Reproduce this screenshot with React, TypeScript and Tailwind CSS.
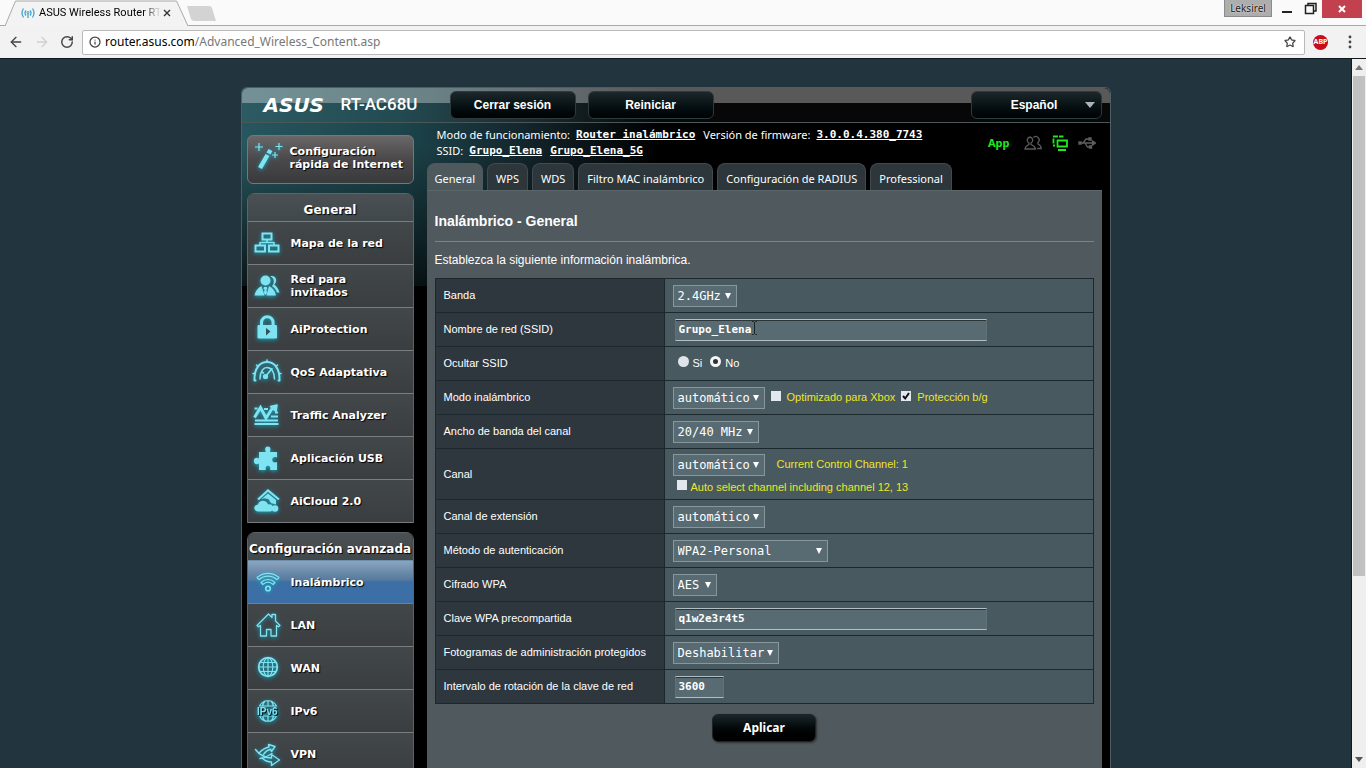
import React from 'react';
import { ArrowLeft, ArrowRight, Info, RotateCw, Star } from 'lucide-react';

interface MenuItem {
  label: React.ReactNode;
  icon: React.ReactNode;
  active?: boolean;
}

interface SelectProps {
  id: string;
  options: string[];
  className: string;
}

const Icon: React.FC<{ children: React.ReactNode }> = ({ children }) => (
  <svg
    viewBox="0 0 28 28"
    className="h-7 w-7 shrink-0 overflow-visible fill-none stroke-[#7fe3f1] drop-shadow-[0_1px_2px_#11aac4]"
    strokeWidth="1.6"
    strokeLinejoin="round"
    strokeLinecap="round"
  >
    {children}
  </svg>
);

const generalItems: MenuItem[] = [
  {
    label: 'Mapa de la red',
    icon: (
      <Icon>
        <path strokeWidth="2" strokeLinejoin="miter" d="M9.5 4.5h9v6h-9zM2.5 16.5h9.5v6H2.5zM16 16.5h9.5v6H16z" />
        <path d="M14 11v2.500M7 16v-2.500h14V16" />
      </Icon>
    ),
  },
  {
    label: <>Red para<br />invitados</>,
    icon: (
      <Icon>
        <path fill="#7fe3f1" stroke="none" d="M17 4.200c4-1.200 6.500 1.300 6 4.800-.2 1.600-.8 2.800-1.800 3.700 2.500 1.600 4 3.800 5.300 7.800H24c-1-3-2.500-5-5-6.300 1.500-1.800 2-3.500 1.700-6-.3-1.700-1.500-3.200-3.700-4z" />
        <circle cx="12.500" cy="8.500" r="5" fill="#7fe3f1" stroke="none" />
        <path fill="#7fe3f1" stroke="none" d="M8.500 14l3 9.500H1.500c.8-4 3-7.700 7-9.500zM16 14c4 1.800 6.300 5.500 7 9.500H13.500z" />
        <path fill="#7fe3f1" stroke="none" d="M11 15h2.800l.6 1.500-1 1.200.6 3.300-1.600 2-1.500-2 .7-3.300-1.200-1.200z" />
      </Icon>
    ),
  },
  {
    label: 'AiProtection',
    icon: (
      <Icon>
        <path strokeWidth="3" d="M8.500 11V7.500a5.800 5.800 0 0 1 11.600 0V11" />
        <rect x="4.500" y="10" width="19.500" height="13.500" rx="1.200" fill="#7fe3f1" stroke="none" />
        <path fill="#33515a" stroke="none" d="M13 13l4.500 3.500-4.500 4z" />
      </Icon>
    ),
  },
  {
    label: 'QoS Adaptativa',
    icon: (
      <Icon>
        <path strokeWidth="2" d="M2.500 22.500h-1C1 10 7 4 14 4s13 6 12.500 18.500h-1" />
        <path strokeWidth="1.500" d="M7 21c0-8 3.500-11.500 7-11.500 4 0 7.500 4 7.500 11.500" />
        <path d="M14 4V2M5 8.500L3.500 7M23 8.500L24.500 7M1.500 15.500H0M28 15.500h-1.500M12.500 18.500L19 10.500M9 14l1.500 1" />
        <circle cx="12.500" cy="18.500" r="1.800" fill="#7fe3f1" />
      </Icon>
    ),
  },
  {
    label: 'Traffic Analyzer',
    icon: (
      <Icon>
        <path strokeWidth="3" strokeLinejoin="miter" strokeLinecap="butt" d="M1.500 16.500l6-10 5.500 10.500 6.500-10" />
        <path fill="#7fe3f1" d="M17.500 5.500l6.500-1.500-1 6.500z" />
        <path strokeWidth="2" strokeLinecap="butt" d="M1.500 7.500h3M11 8h4M2 19.500h23M1.500 23h24M18 15.500h7M22 11.500h3" />
      </Icon>
    ),
  },
  {
    label: 'Aplicación USB',
    icon: (
      <Icon>
        <path
          fill="#7fe3f1"
          stroke="none"
          d="M6 8h7c-1.500-2.500-1-5.500 1.800-5.500S18 5.500 16.800 8H24v5.500c-2.800-1.200-4.800 0-4.800 2.300s2 3.400 4.800 2.200V26h-7c.9-2.500-.2-4.200-2-4.200s-3 1.700-2 4.200H6v-6.500c-2.800 1.500-5.200.2-5.200-2.500S3.200 13 6 14.500z"
        />
      </Icon>
    ),
  },
  {
    label: 'AiCloud 2.0',
    icon: (
      <Icon>
        <path strokeWidth="2.200" strokeLinecap="butt" strokeLinejoin="miter" d="M5 12.500L15 3.500l11 9" />
        <path fill="#7fe3f1" stroke="none" d="M8 12.500l7-6 8 6.500v4.500l-5-1.500-2.500-4-4.500-.8z" />
        <path fill="#7fe3f1" stroke="none" d="M5.500 24.500C0 24.500 0 18 5 17.500c.5-4.500 8.500-5.500 10 0 3-.8 5 .8 5 3.500 0 2.200-1.200 3.500-3 3.500z" />
        <circle cx="22" cy="21.500" r="3.300" fill="#7fe3f1" stroke="none" />
      </Icon>
    ),
  },
];

const advancedItems: MenuItem[] = [
  {
    label: 'Inalámbrico',
    active: true,
    icon: (
      <Icon>
        <path d="M4 9.500c6.500-5.500 15.500-5.500 22 0l-2 2.200c-5.300-4.700-12.700-4.700-18 0z" strokeWidth="1.200" />
        <path d="M8 14.500c4-4 10-4 14 0l-1.800 2c-3.200-3-7.200-3-10.400 0z" strokeWidth="1.200" />
        <circle cx="15" cy="20.500" r="2.300" />
      </Icon>
    ),
  },
  {
    label: 'LAN',
    icon: (
      <Icon>
        <path d="M4 14.500L15.500 3l3.500 3.500V3.500h3.500V10l4.500 4.500-1.500 1.300-2-1.300V25h-5.500v-6.500h-4.500V25H7.500V14.500l-2 1.300z" strokeWidth="1.300" />
      </Icon>
    ),
  },
  {
    label: 'WAN',
    icon: (
      <Icon>
        <circle cx="15" cy="13" r="9.300" strokeWidth="1.800" />
        <path d="M15 4v18M6 13h18M7.500 8.500h15M7.500 17.500h15" strokeWidth="1.200" />
        <ellipse cx="15" cy="13" rx="4.800" ry="9.200" strokeWidth="1.200" />
      </Icon>
    ),
  },
  {
    label: 'IPv6',
    icon: (
      <Icon>
        <path d="M6.500 9C10 2 20 2 23.500 9zM6.500 19C10 26 20 26 23.500 19zM15 4v5M15 19v5M12 4c-1.500 1.500-2 3-2.500 5M18 4c1.500 1.500 2 3 2.500 5M12 24c-1.500-1.500-2-3-2.500-5M18 24c1.500-1.500 2-3 2.500-5" strokeWidth="1.200" />
        <text x="4" y="17.500" className="fill-[#7fe3f1] stroke-none font-['Liberation_Sans'] text-[10px]">IPv6</text>
      </Icon>
    ),
  },
  {
    label: 'VPN',
    icon: (
      <Icon>
        <path d="M2.500 9.500c4 6 11 8.500 16 8.500v-3.500l8 5.500-8 5.500v-3.500c-4 0-7-1.500-9.500-4M6 13c4-4 7-5.500 10-6l-.5-2.500 6.500 2-3.500 5-.8-2.200c-3 .6-5 2-7.200 5M7 18.500l5-1 7-4" strokeWidth="1.400" />
      </Icon>
    ),
  },
];

const tabs = ['General', 'WPS', 'WDS', 'Filtro MAC inalámbrico', 'Configuración de RADIUS', 'Professional'];

const Menu: React.FC<{ title: string; items: MenuItem[] }> = ({ title, items }) => (
  <nav className="overflow-hidden rounded-t-lg border-x border-[#5d6467] font-bold text-white">
    <h2 className="flex h-7 items-center justify-center border-t border-[#5d6467] bg-linear-to-b from-[#4a5053] to-[#41484b] pt-1 text-xs whitespace-nowrap text-shadow-[1px_1px_1px_#000]">
      {title}
    </h2>
    {items.map((item, index) => (
      <a
        key={index}
        href="#"
        className={`flex h-[43px] items-center gap-2.5 border-t pl-[5px] text-[11px] leading-[13px] text-shadow-[1px_1px_1px_#000] ${
          item.active
            ? 'border-[#6d8fac] bg-linear-to-b from-[#8ba5bf] from-0% via-[#56799d] via-45% to-[#3b6fa5] to-50%'
            : 'border-[#777d80] bg-linear-to-b from-[#42474a] to-[#3a3e41]'
        }`}
      >
        {item.icon}
        <span>{item.label}</span>
      </a>
    ))}
    <div className="border-t border-[#777d80]" />
  </nav>
);

const Select: React.FC<SelectProps> = ({ id, options, className }) => (
  <span className={`relative inline-flex ${className}`}>
    <select
      id={id}
      className="h-[22px] w-full appearance-none border border-[#87979c] bg-[#596b72] pl-1 font-['DejaVu_Sans_Mono',monospace] text-xs text-white"
    >
      {options.map((option) => (
        <option key={option}>{option}</option>
      ))}
    </select>
    <svg viewBox="0 0 6 6" className="pointer-events-none absolute top-2 right-1.5 h-1.5 w-1.5 fill-white">
      <path d="M0 0h6L3 6z" />
    </svg>
  </span>
);

const inputClass =
  "h-[22px] border border-x-[#5f7278] border-t-[#b4bfc3] border-b-[#b4bfc3] bg-[#596b72] pl-[3px] font-['DejaVu_Sans_Mono',monospace] text-[11px] font-bold text-white shadow-[inset_0_1px_0_#2b3538]";

const Check: React.FC<{ id: string; checked?: boolean }> = ({ id, checked }) => (
  <span className="relative mb-1 inline-flex">
    <input id={id} type="checkbox" defaultChecked={checked} className="peer h-2.5 w-2.5 appearance-none bg-[#e3e8ee]" />
    <svg viewBox="0 0 10 10" className="pointer-events-none absolute inset-0 hidden h-2.5 w-2.5 fill-none stroke-[#111] stroke-2 peer-checked:block">
      <path d="M2 5l2.200 2.500L8 2" />
    </svg>
  </span>
);

const radioClass =
  'mb-1 h-[11px] w-[11px] appearance-none rounded-full bg-[#dfe4ea] checked:border-3 checked:border-[#f4f6f8] checked:bg-[#2c3335]';

const Row: React.FC<{ id: string; label: string; children: React.ReactNode }> = ({ id, label, children }) => (
  <tr className="border border-[#1b292e]">
    <th scope="row" className="w-[229px] border-r border-[#1b292e] bg-[#2f373e] px-2 text-left font-normal">
      <label htmlFor={id}>{label}</label>
    </th>
    <td className="h-[34px] bg-[#495960] px-2">
      <div className="flex items-center">{children}</div>
    </td>
  </tr>
);

const headerButton =
  "flex h-7 items-center justify-center rounded-md border border-[#2d3a3e] bg-linear-to-b from-[#1d282c] to-[#000304] font-['Liberation_Sans',sans-serif] text-xs font-bold text-white";

const statusLink = "font-['DejaVu_Sans_Mono',monospace] font-bold underline";

const BrowserBar = () => (
  <header className="bg-[#fafafa] font-['Noto_Sans',sans-serif] text-xs">
    <div className="flex h-[26px] items-start justify-between border-b border-[#a8a8a8]">
      <div className="flex pl-[5px]">
        <div className="relative flex h-[26px] w-[184px] items-center pl-4">
          <svg viewBox="0 0 184 26" className="absolute inset-0 h-full w-full fill-[#f3f3f3] stroke-[#aaa]">
            <path d="M0 26L10.500 1h161L183 26" />
          </svg>
          <svg viewBox="0 0 14 12" className="relative h-3 w-3.5 fill-none stroke-[#45a5cf]">
            <path d="M2.500 1.500c-2 3-2 6 0 9M5 3.500c-1.300 1.700-1.300 3.500 0 5M9 3.500c1.300 1.700 1.300 3.500 0 5M11.500 1.500c2 3 2 6 0 9M7 6v5" strokeWidth="1.300" />
            <circle cx="7" cy="5.500" r="1" />
          </svg>
          <span className="relative ml-1 w-[122px] mask-r-from-85% font-['Roboto',sans-serif] text-[11px] whitespace-nowrap text-black">ASUS Wireless Router RT</span>
          <button aria-label="Cerrar pestaña" className="relative ml-0.5">
            <svg viewBox="0 0 8 8" className="h-2 w-2 stroke-[#333] stroke-[1.4]">
              <path d="M1 1l6 6M7 1L1 7" />
            </svg>
          </button>
        </div>
        <button aria-label="Nueva pestaña" className="mt-1.5 -ml-0.5 self-start">
          <svg viewBox="0 0 30 15" className="h-[15px] w-[30px] fill-[#d3d3d3]">
            <path d="M0 0h22q2 0 3 2l4 13H7q-2 0-3-2z" />
          </svg>
        </button>
      </div>
      <div className="flex items-start">
        <button className="mr-2.5 h-[17px] w-12 border border-t-0 border-[#8b8b8b] bg-[#adadad] text-[10px] leading-none text-[#222] text-shadow-[0_0_2px_#fff]">Leksirel</button>
        <button aria-label="Minimizar" className="h-4 w-5">
          <svg viewBox="0 0 20 16" className="h-4 w-5 stroke-[#222] stroke-2"><path d="M0 12h10" /></svg>
        </button>
        <button aria-label="Restaurar" className="h-4 w-5">
          <svg viewBox="0 0 20 16" className="h-4 w-5 fill-none stroke-[#222] stroke-[1.5]"><path d="M3.500 5.500h8v8h-8zM6 5V3.500h8V11h-2" /></svg>
        </button>
        <button aria-label="Cerrar" className="flex h-[18px] w-10 items-center justify-center bg-[#c3414f]">
          <svg viewBox="0 0 8 8" className="h-2 w-2 stroke-white stroke-2"><path d="M1 1l6 6M7 1L1 7" /></svg>
        </button>
        <div className="w-1" />
      </div>
    </div>
    <div className="flex h-[33px] items-center gap-1.5 border-b border-[#10191f] bg-[#f2f2f2] px-2 text-[#444]">
      <button aria-label="Atrás"><ArrowLeft className="h-4 w-4" /></button>
      <button aria-label="Adelante" className="ml-1 text-[#d0d0d0]"><ArrowRight className="h-4 w-4" /></button>
      <button aria-label="Recargar" className="mr-0.5 ml-1"><RotateCw className="h-3.5 w-3.5" strokeWidth={2.5} /></button>
      <div className="flex h-[25px] flex-1 items-center rounded-xs border border-[#b9b9b9] bg-white pr-2 pl-1.5">
        <Info className="h-3 w-3" strokeWidth={2.5} />
        <div className="relative ml-1 flex-1">
          <input aria-label="Dirección" defaultValue="router.asus.com/Advanced_Wireless_Content.asp" className="w-full text-[#777] outline-none" />
          <span aria-hidden="true" className="pointer-events-none absolute top-0 left-0 bg-white text-black">router.asus.com</span>
        </div>
        <button aria-label="Favorito"><Star className="h-3 w-3" strokeWidth={2.5} /></button>
      </div>
      <button className="ml-0.5 flex h-[15px] w-[15px] items-center justify-center rounded-full bg-[#c70d1c] text-[7px] font-bold text-white">ABP</button>
      <button aria-label="Menú" className="mr-0.5 ml-2.5">
        <svg viewBox="0 0 12 14" className="h-3.5 w-3 fill-[#444]">
          <circle cx="6" cy="2" r="1.4" /><circle cx="6" cy="7" r="1.4" /><circle cx="6" cy="12" r="1.4" />
        </svg>
      </button>
    </div>
  </header>
);

const Sidebar = () => (
  <aside className="flex w-[167px] shrink-0 flex-col gap-[9px] pt-3">
    <a
      href="#"
      className="flex h-[49px] items-center gap-2 rounded-md border border-[#777] bg-linear-to-b from-[#6a6768] via-[#4a484a] to-[#393a3c] pb-1 pl-1.5 text-[11px] leading-[13px] font-bold text-white text-shadow-[1px_1px_1px_#000]"
    >
      <svg viewBox="0 0 28 28" className="h-7 w-7 shrink-0 overflow-visible stroke-[#7fe3f1] drop-shadow-[0_1px_2px_#11aac4]">
        <path strokeWidth="4.5" d="M6 24l7.500-13" />
        <path strokeWidth="4.5" d="M14.500 9.500l2-3.500" />
        <path strokeWidth="1.2" d="M5 -1v8M1 3h8M25 -1v7M21.500 2.500h7M21 8v6M18 11h6" />
      </svg>
      <span className="whitespace-nowrap">Configuración<br />rápida de Internet</span>
    </a>
    <Menu title="General" items={generalItems} />
    <Menu title="Configuración avanzada" items={advancedItems} />
  </aside>
);

const SettingsTable = () => (
  <table className="w-full border-collapse text-[11px]">
    <tbody>
      <Row id="band" label="Banda">
        <Select id="band" options={['2.4GHz', '5GHz']} className="w-16" />
      </Row>
      <Row id="ssid" label="Nombre de red (SSID)">
        <span className="relative ml-0.5">
          <input id="ssid" defaultValue="Grupo_Elena" className={`${inputClass} w-[312px]`} />
          <svg viewBox="0 0 7 14" className="pointer-events-none absolute top-0.5 left-19 h-3.5 w-[7px] fill-none stroke-[#20282b]">
            <path d="M1 .5h1.500l1 1 1-1H6M3.500 1v12M1 13.500h1.500l1-1 1 1H6" />
          </svg>
        </span>
      </Row>
      <Row id="hide-no" label="Ocultar SSID">
        <input type="radio" name="hide" id="hide-yes" className={`${radioClass} ml-[5px]`} />
        <label htmlFor="hide-yes" className="ml-1">Si</label>
        <input type="radio" name="hide" id="hide-no" defaultChecked className={`${radioClass} ml-2`} />
        <label htmlFor="hide-no" className="ml-1">No</label>
      </Row>
      <Row id="mode" label="Modo inalámbrico">
        <Select id="mode" options={['automático']} className="mr-1.5 w-[92px]" />
        <Check id="xbox" />
        <label htmlFor="xbox" className="mx-1.5 text-[#ece62a]">Optimizado para Xbox</label>
        <Check id="protection" checked />
        <label htmlFor="protection" className="ml-1.5 text-[#ece62a]">Protección b/g</label>
      </Row>
      <Row id="bandwidth" label="Ancho de banda del canal">
        <Select id="bandwidth" options={['20/40 MHz']} className="w-[86px]" />
      </Row>
      <Row id="channel" label="Canal">
        <div className="flex h-[50px] flex-col justify-center">
          <div className="flex items-center">
            <Select id="channel" options={['automático']} className="w-[92px]" />
            <span className="ml-3 text-[#ece62a]">Current Control Channel: 1</span>
          </div>
          <div className="flex items-center pt-1 pl-1">
            <Check id="auto" />
            <label htmlFor="auto" className="ml-1 text-[#ece62a]">Auto select channel including channel 12, 13</label>
          </div>
        </div>
      </Row>
      <Row id="extension" label="Canal de extensión">
        <Select id="extension" options={['automático']} className="w-[92px]" />
      </Row>
      <Row id="auth" label="Método de autenticación">
        <Select id="auth" options={['WPA2-Personal']} className="w-[155px]" />
      </Row>
      <Row id="cipher" label="Cifrado WPA">
        <Select id="cipher" options={['AES']} className="w-11" />
      </Row>
      <Row id="key" label="Clave WPA precompartida">
        <input id="key" defaultValue="q1w2e3r4t5" className={`${inputClass} ml-0.5 w-[312px]`} />
      </Row>
      <Row id="frames" label="Fotogramas de administración protegidos">
        <Select id="frames" options={['Deshabilitar']} className="w-[106px]" />
      </Row>
      <Row id="rotation" label="Intervalo de rotación de la clave de red">
        <input id="rotation" defaultValue="3600" className={`${inputClass} ml-0.5 w-[49px]`} />
      </Row>
    </tbody>
  </table>
);

const StatusBar = () => (
  <div className="flex h-10 items-start justify-between pt-1 pr-1.5 pl-2.5 text-[11px] leading-4 text-white">
    <div className="whitespace-nowrap">
      <p className="flex gap-1.5">
        <span>Modo de funcionamiento:</span>
        <a href="#" className={`${statusLink} mr-0.5`}>Router inalámbrico</a>
        <span>Versión de firmware:</span>
        <a href="#" className={statusLink}>3.0.0.4.380_7743</a>
      </p>
      <p className="flex gap-1.5">
        <span>SSID:</span>
        <a href="#" className={`${statusLink} mr-0.5`}>Grupo_Elena</a>
        <a href="#" className={statusLink}>Grupo_Elena_5G</a>
      </p>
    </div>
    <div className="flex items-center gap-2.5 pt-2">
      <a href="#" className="mr-1 font-bold text-[#1fe81f]">App</a>
      <svg viewBox="0 0 18 16" className="h-4 w-[18px] fill-none stroke-[#5a5a5a] stroke-[1.3]">
        <path d="M6 2a3.200 3.200 0 0 1 1 6v1.500c2.500 1 4 2 4.500 4.500H1c.3-2.500 2-3.500 4-4.500V8a3.200 3.200 0 0 1 1-6zM9.500 2.500a3.200 3.200 0 0 1 4.500 5V9c2 .8 3 2.200 3.200 4.500h-4" />
      </svg>
      <svg viewBox="0 0 16 16" className="h-4 w-4 fill-none stroke-[#1fe81f] stroke-[1.8]">
        <path d="M5.500 5.500H15v6H5.500zM6 15h8" />
        <path d="M1 1.500h10.500M1.500 3.500v5M1 10.500h2" strokeDasharray="5 1" />
      </svg>
      <svg viewBox="0 0 18 14" className="h-3.5 w-[18px] fill-none stroke-[#5f5f5f] stroke-[1.3]">
        <path d="M2 7h14M5 7l3-4h3M7 7l2.500 4H12" />
        <path fill="#5f5f5f" d="M14.500 5l3 2-3 2zM11 2h2v2h-2zM11.500 10h2v2h-2zM1 6h2v2H1z" />
      </svg>
    </div>
  </div>
);

const App = () => {
  return (
    <div className="flex h-screen flex-col overflow-hidden">
      <BrowserBar />
      <div className="flex min-h-0 flex-1">
        <main className="flex-1 overflow-hidden bg-[#22343d] pt-7 font-['DejaVu_Sans',sans-serif]">
          <div className="mx-auto w-[870px] max-w-full rounded-t-md border-x border-t border-[#4d5e63] bg-black bg-[linear-gradient(to_bottom,transparent_30%,#000b),linear-gradient(to_right,#27565e,#1c454c_18%,#14272d_32%,#000_48%)] bg-size-[100%_198px] bg-no-repeat">
            <div className="flex h-[35px] items-center rounded-t-md border-b border-[#4b5659] bg-linear-to-b from-white/35 from-43% to-white/3 to-44% pr-2 pl-[22px]">
              <span className="w-[77px] text-xl font-bold text-white italic">ASUS</span>
              <span className="w-[109px] font-['Roboto',sans-serif] text-[17px] font-medium text-white">RT-AC68U</span>
              <button className={`${headerButton} w-[126px]`}>Cerrar sesión</button>
              <button className={`${headerButton} ml-3 w-[126px]`}>Reiniciar</button>
              <button className={`${headerButton} relative ml-auto w-[131px] pr-1`}>
                Español
                <svg viewBox="0 0 10 6" className="absolute top-2.5 right-1.5 h-1.5 w-2.5 fill-[#aab4b8]"><path d="M0 0h10L5 6z" /></svg>
              </button>
            </div>
            <div className="flex items-start pr-2 pl-[5px]">
              <Sidebar />
              <div className="ml-[13px] min-w-0 flex-1 font-['Noto_Sans',sans-serif]">
                <StatusBar />
                <div className="flex gap-1 text-[11px] text-white">
                  {tabs.map((tab, index) => (
                    <a
                      key={tab}
                      href="#"
                      className={
                        index === 0
                          ? 'flex h-[27px] items-center rounded-t-lg bg-[#4d595d] px-2 pt-1.5 whitespace-nowrap'
                          : 'flex h-[27px] items-center rounded-t-lg border border-b-0 border-[#414a4e] bg-[#2d363a] px-2 pt-1 whitespace-nowrap'
                      }
                    >
                      {tab}
                    </a>
                  ))}
                </div>
                <section className="h-[640px] border-t border-[#5b676b] bg-[#4f595e] px-2 font-['Liberation_Sans',sans-serif] text-xs text-white">
                  <h1 className="pt-5 pb-2.5 text-sm leading-5 font-bold">Inalámbrico - General</h1>
                  <div className="border-t border-[#7a8588]" />
                  <p className="pt-2.5 pb-2.5 leading-4">Establezca la siguiente información inalámbrica.</p>
                  <SettingsTable />
                  <div className="mt-2.5 flex justify-center">
                    <button className="h-7 w-[104px] rounded-md border border-[#1b2528] bg-linear-to-b from-[#1b272b] to-black font-['Noto_Sans',sans-serif] font-bold shadow-[1px_1px_2px_#333]">
                      Aplicar
                    </button>
                  </div>
                </section>
              </div>
            </div>
          </div>
        </main>
        <div className="flex w-[15px] flex-col items-center border-l border-[#10191f] bg-[#efefef]">
          <svg viewBox="0 0 8 5" className="my-1.5 h-[5px] w-2 fill-[#777]"><path d="M0 5l4-5 4 5z" /></svg>
          <div className="h-[500px] w-3 bg-[#c1c1c1]" />
          <svg viewBox="0 0 8 5" className="mt-auto mb-1.5 h-[5px] w-2 fill-[#555]"><path d="M0 0l4 5 4-5z" /></svg>
        </div>
      </div>
    </div>
  );
};

export default App;
